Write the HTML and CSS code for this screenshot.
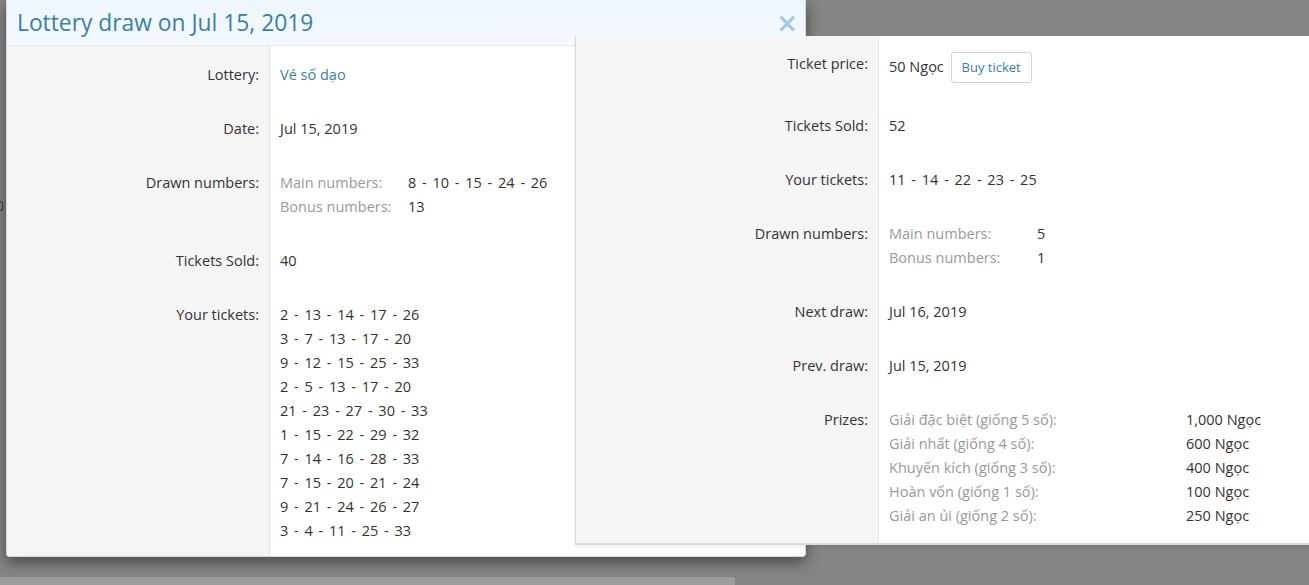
FILE: index.html
```html
<!DOCTYPE html>
<html lang="vi">
<head>
<meta charset="utf-8">
<title>Lottery draw</title>
<link rel="stylesheet" href="styles.css">
</head>
<body>
<div class="backdrop">
  <div class="bd-edge">0</div>
  <div class="bd-bar"></div>
</div>

<div class="dialog">
  <div class="dialog-head">
    <h1 class="dialog-title">Lottery draw on Jul 15, 2019</h1>
    <span class="close">&times;</span>
  </div>
  <div class="info">
    <div class="row"><div class="lbl">Lottery:</div><div class="val"><a class="link" href="#">Vé số dạo</a></div></div>
    <div class="row"><div class="lbl">Date:</div><div class="val">Jul 15, 2019</div></div>
    <div class="row"><div class="lbl">Drawn numbers:</div><div class="val">
      <div class="sub sub-left">
        <span class="muted">Main numbers:</span><span class="nums">8 - 10 - 15 - 24 - 26</span>
        <span class="muted">Bonus numbers:</span><span>13</span>
      </div>
    </div></div>
    <div class="row"><div class="lbl">Tickets Sold:</div><div class="val">40</div></div>
    <div class="row"><div class="lbl">Your tickets:</div><div class="val nums">
      <div>2 - 13 - 14 - 17 - 26</div>
      <div>3 - 7 - 13 - 17 - 20</div>
      <div>9 - 12 - 15 - 25 - 33</div>
      <div>2 - 5 - 13 - 17 - 20</div>
      <div>21 - 23 - 27 - 30 - 33</div>
      <div>1 - 15 - 22 - 29 - 32</div>
      <div>7 - 14 - 16 - 28 - 33</div>
      <div>7 - 15 - 20 - 21 - 24</div>
      <div>9 - 21 - 24 - 26 - 27</div>
      <div>3 - 4 - 11 - 25 - 33</div>
    </div></div>
  </div>
</div>

<div class="panel">
  <div class="prow"><div class="lbl">Ticket price:</div><div class="val">50 Ngọc <button class="btn" type="button">Buy ticket</button></div></div>
  <div class="prow"><div class="lbl">Tickets Sold:</div><div class="val">52</div></div>
  <div class="prow"><div class="lbl">Your tickets:</div><div class="val nums">11 - 14 - 22 - 23 - 25</div></div>
  <div class="prow"><div class="lbl">Drawn numbers:</div><div class="val">
    <div class="sub sub-right">
      <span class="muted">Main numbers:</span><span>5</span>
      <span class="muted">Bonus numbers:</span><span>1</span>
    </div>
  </div></div>
  <div class="prow"><div class="lbl">Next draw:</div><div class="val">Jul 16, 2019</div></div>
  <div class="prow"><div class="lbl">Prev. draw:</div><div class="val">Jul 15, 2019</div></div>
  <div class="prow"><div class="lbl">Prizes:</div><div class="val">
    <div class="sub sub-prize">
      <span class="muted">Giải đặc biệt (giống 5 số):</span><span>1,000 Ngọc</span>
      <span class="muted">Giải nhất (giống 4 số):</span><span>600 Ngọc</span>
      <span class="muted">Khuyến kích (giống 3 số):</span><span>400 Ngọc</span>
      <span class="muted">Hoàn vốn (giống 1 số):</span><span>100 Ngọc</span>
      <span class="muted">Giải an ủi (giống 2 số):</span><span>250 Ngọc</span>
    </div>
  </div></div>
</div>
</body>
</html>
```

FILE: styles.css
```css
* { box-sizing: border-box; }
html, body { margin: 0; padding: 0; }
body {
  width: 1309px;
  height: 585px;
  overflow: hidden;
  position: relative;
  background: #848484;
  font-family: "Open Sans", "Noto Sans", "Liberation Sans", sans-serif;
  font-size: 14.5px;
  line-height: 24px;
  color: #333;
}

.backdrop {
  height: 585px;
  display: flex;
  flex-direction: column;
  justify-content: space-between;
}
.bd-edge {
  margin-top: 194px;
  width: 6px;
  overflow: hidden;
  color: #444;
  font-size: 14px;
  text-indent: -4px;
}
.bd-bar {
  width: 735px;
  height: 8px;
  background: #9a9c9e;
  border-top-right-radius: 2px;
}

/* Left dialog */
.dialog {
  position: absolute;
  left: 6px;
  top: 0;
  width: 800px;
  height: 557px;
  background: #fff;
  border: 1px solid #d8d8d8;
  border-top: 0;
  border-radius: 0 0 4px 4px;
  box-shadow: 0 5px 14px rgba(0, 0, 0, 0.45);
  overflow: hidden;
}
.dialog-head {
  height: 46px;
  background: linear-gradient(#eef6fd, #f3f9fe);
  border-bottom: 1px solid #e3e6e8;
  display: flex;
  align-items: center;
  justify-content: space-between;
  padding: 0 7px 0 10px;
}
.dialog-title {
  margin: 0;
  font-weight: normal;
  font-size: 22.8px;
  color: #3b7ea9;
  line-height: 30px;
}
.close {
  font-family: "DejaVu Sans", sans-serif;
  font-size: 26px;
  font-weight: bold;
  color: #a6c6dc;
  line-height: 26px;
}

.row {
  display: grid;
  grid-template-columns: 263px 1fr;
}
.lbl {
  background: #f5f5f5;
  border-right: 1px solid #e6e6e6;
  text-align: right;
  padding: 17px 10px 13px 0;
}
.val {
  padding: 17px 10px 13px 10px;
}
.row:last-child .lbl,
.row:last-child .val { padding-bottom: 19px; }

.nums { word-spacing: 2px; }
.link { color: #3b7ea9; text-decoration: none; }
.muted { color: #999; }

.sub { display: grid; }
.sub-left { grid-template-columns: 128px auto; }
.sub-right { grid-template-columns: 148px auto; }
.sub-prize { grid-template-columns: 297px auto; }

/* Right panel */
.panel {
  position: absolute;
  left: 575px;
  top: 36px;
  width: 740px;
  height: 509px;
  background: #fff;
  border-left: 1px solid #d6d6d6;
  border-bottom: 2px solid #dadada;
  box-shadow: 0 3px 3px rgba(0, 0, 0, 0.06);
  display: flex;
  flex-direction: column;
}
.prow {
  display: grid;
  grid-template-columns: 303px 1fr;
}
.prow:last-child { flex: 1; }
.panel .lbl {
  border-right: 1px solid #e6e6e6;
  padding-right: 10px;
}
.prow:first-child .lbl { padding-top: 16px; }
.prow:first-child .val { padding: 16px 10px 14px 10px; }

.btn {
  font-family: inherit;
  font-size: 13px;
  line-height: 19px;
  color: #3b7ea9;
  background: #fff;
  border: 1px solid #d2d2d2;
  border-radius: 3px;
  padding: 5px 10px;
  margin-left: 3px;
  vertical-align: baseline;
}
```
